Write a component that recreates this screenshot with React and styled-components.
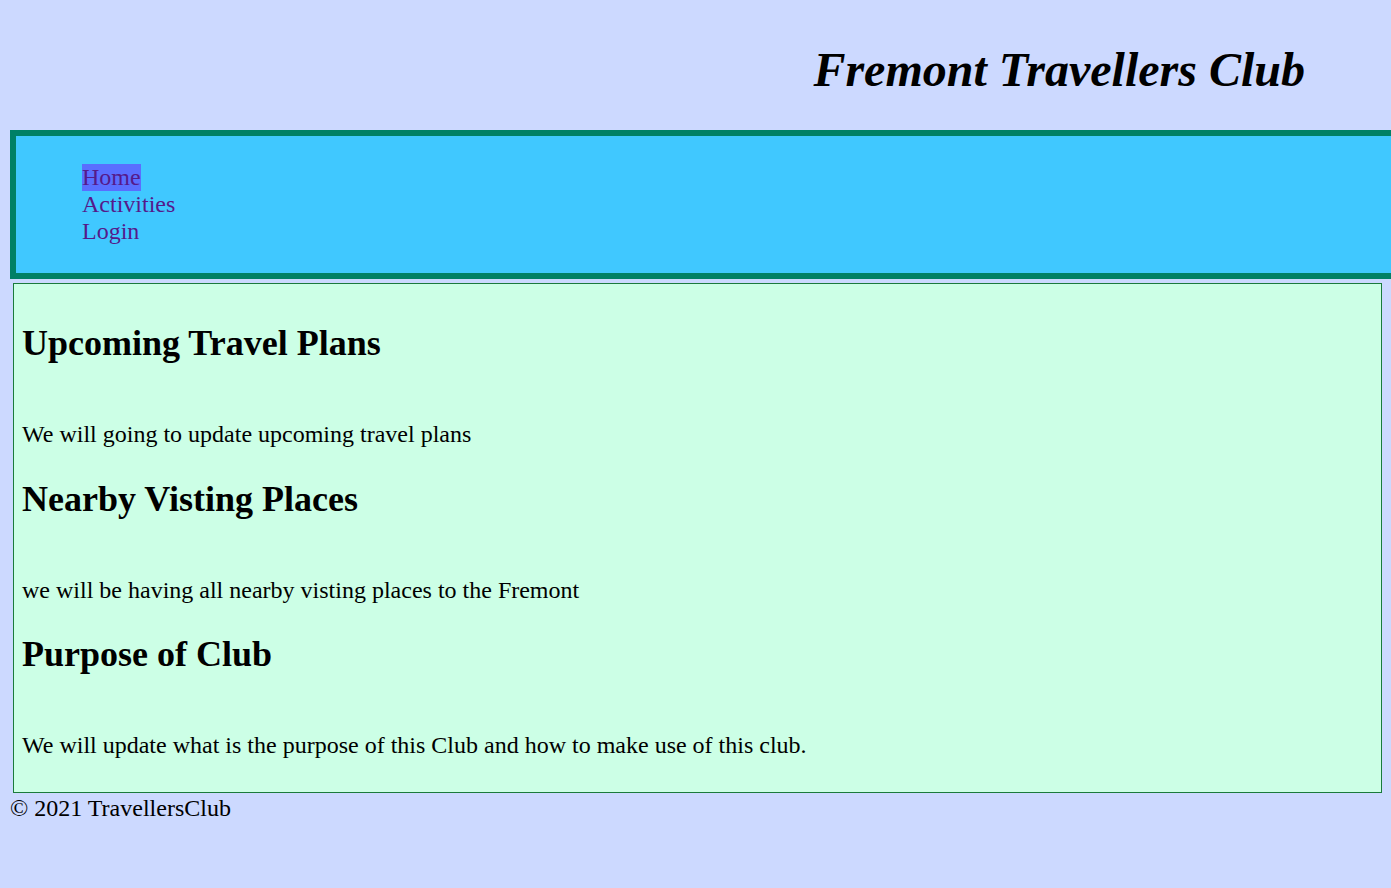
import React from 'react';
import styled, { createGlobalStyle, css } from 'styled-components';

const GlobalStyle = createGlobalStyle`
  body {
    margin: 0;
    background: #ccd9ff;
    color: #000;
    font-family: 'Liberation Serif', 'Times New Roman', serif;
    font-size: 24px;
  }

  #root {
    overflow: visible;
  }
`;

const Page = styled.div`
  padding: 8px;
`;

const Header = styled.header`
  padding-right: 78px;
  text-align: right;
`;

const Title = styled.h1`
  margin: 34px 0 33px;
  font-size: 48px;
  font-style: italic;
  font-weight: 700;
  line-height: 55px;
`;

// runs off the right edge of the window
const Nav = styled.nav`
  margin: 0 -8px 0 2px;
  padding: 28px 0 28px 26px;
  border: 6px solid #008066;
  border-right: none;
  background: #40c8ff;
`;

const Menu = styled.ul`
  margin: 0;
  padding: 0 0 0 40px;
  list-style: none;
`;

const MenuItem = styled.li`
  line-height: 27px;
`;

const MenuLink = styled.a`
  color: #551a8b;
  text-decoration: none;

  ${({ $active }) =>
    $active &&
    css`
      display: inline-block;
      background: #5a6eff;
    `}
`;

const Main = styled.main`
  margin: 4px 1px 0 5px;
  padding: 9px 8px 8px;
  border: 1px solid #1b7a3c;
  background: #ccffe6;
`;

const SectionTitle = styled.h2`
  margin: 30px 0 57px;
  font-size: 36px;
  font-weight: 700;
  line-height: 41px;
`;

const Text = styled.p`
  margin: 24px 0;
  line-height: 27.6px;
`;

const Footer = styled.footer`
  padding: 2px 0 0 2px;
  line-height: 27.6px;
`;

const sections = [
  {
    title: 'Upcoming Travel Plans',
    text: 'We will going to update upcoming travel plans',
  },
  {
    title: 'Nearby Visting Places',
    text: 'we will be having all nearby visting places to the Fremont',
  },
  {
    title: 'Purpose of Club',
    text: 'We will update what is the purpose of this Club and how to make use of this club.',
  },
];

const links = ['Home', 'Activities', 'Login'];

const App = () => (
  <Page>
    <GlobalStyle />
    <Header>
      <Title>Fremont Travellers Club</Title>
    </Header>
    <Nav>
      <Menu>
        {links.map((link, i) => (
          <MenuItem key={link}>
            <MenuLink href="#" $active={i === 0}>
              {link}
            </MenuLink>
          </MenuItem>
        ))}
      </Menu>
    </Nav>
    <Main>
      {sections.map(section => (
        <section key={section.title}>
          <SectionTitle>{section.title}</SectionTitle>
          <Text>{section.text}</Text>
        </section>
      ))}
    </Main>
    <Footer>&copy; 2021 TravellersClub</Footer>
  </Page>
);

export default App;
